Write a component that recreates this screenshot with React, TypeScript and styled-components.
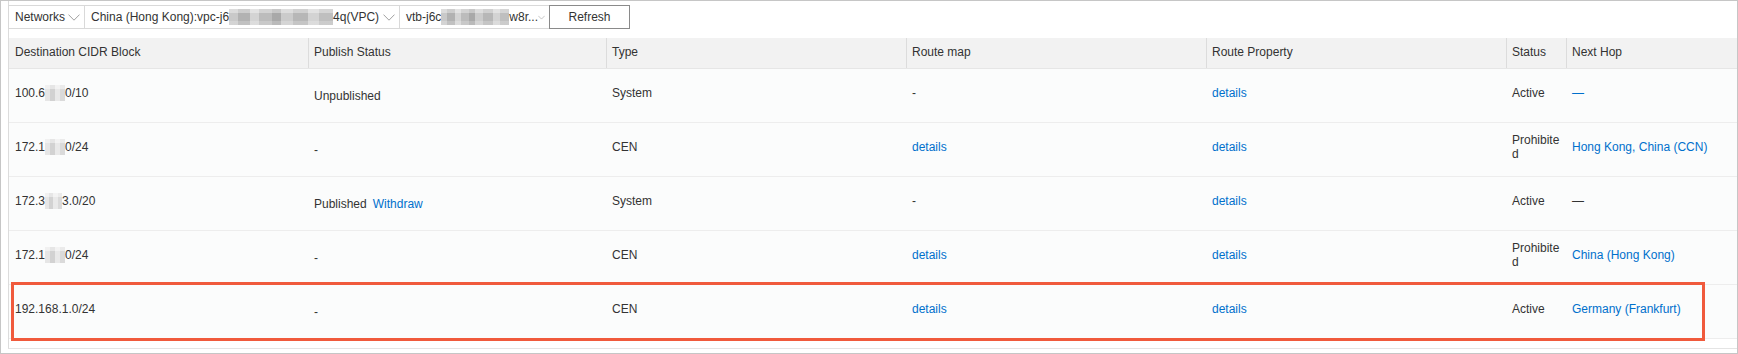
import React from 'react';
import styled, { createGlobalStyle } from 'styled-components';

const GlobalStyle = createGlobalStyle`
  html, body {
    margin: 0;
    padding: 0;
    background: #fff;
  }
  body {
    font-family: "Liberation Sans", Arial, sans-serif;
    font-size: 12px;
    color: #333;
  }
  * {
    box-sizing: border-box;
  }
`;

const Frame = styled.div`
  width: 1738px;
  height: 354px;
  border: 1px solid #c6c6c6;
  padding: 0 0 4px 7px;
  background: #fff;
`;

const Panel = styled.div`
  border-left: 1px solid #dcdcdc;
  border-bottom: 1px solid #e4e4e4;
  padding: 4px 0 9px;
`;

const Toolbar = styled.div`
  display: flex;
  height: 24px;
  margin: 0 0 9px -1px;
`;

const Select = styled.div<{ $w: number }>`
  display: flex;
  align-items: center;
  justify-content: space-between;
  width: ${p => p.$w}px;
  height: 24px;
  border: 1px solid #d9d9d9;
  padding: 0 4px 0 6px;
  white-space: nowrap;
  overflow: hidden;
  background: #fff;
  & + & {
    margin-left: -1px;
  }
`;

const SelectText = styled.span`
  display: flex;
  align-items: center;
  line-height: 14px;
`;

const Button = styled.button`
  width: 81px;
  height: 24px;
  margin-left: -1px;
  border: 1px solid #8a8a8a;
  background: #fff;
  color: #333;
  font: inherit;
  padding: 0;
  cursor: pointer;
`;

// mosaic used where the screenshot hides ids
const Blur = styled.span<{ $w: number; $light?: boolean }>`
  display: inline-block;
  width: ${p => p.$w}px;
  height: 16px;
  vertical-align: middle;
  background: ${p =>
    p.$light
      ? `linear-gradient(180deg, rgba(255,255,255,0.45) 0 25%, rgba(255,255,255,0) 25% 100%),
         linear-gradient(90deg, #e6e6e6 0 25%, #d2d2d2 25% 50%, #e9e9e9 50% 75%, #dadada 75% 100%)`
      : `linear-gradient(180deg, rgba(255,255,255,0.35) 0 25%, rgba(255,255,255,0) 25% 75%, rgba(255,255,255,0.2) 75% 100%),
         linear-gradient(90deg, #c9c9c9 0 9%, #b2b2b2 9% 20%, #d4d4d4 20% 29%, #bcbcbc 29% 41%, #a9a9a9 41% 50%, #cbcbcb 50% 62%, #b7b7b7 62% 76%, #d3d3d3 76% 87%, #bfbfbf 87% 100%)`};
`;

const Chevron = () => (
  <svg width="12" height="7" viewBox="0 0 12 7">
    <polyline points="0.5,0.6 6,6.2 11.5,0.6" fill="none" stroke="#a0a0a0" strokeWidth="1" />
  </svg>
);

const Table = styled.div``;

const Grid = styled.div`
  display: grid;
  grid-template-columns: 299px 298px 300px 300px 300px 60px 1fr;
`;

const HeadRow = styled(Grid)`
  height: 31px;
  background: #f2f2f2;
  border-bottom: 1px solid #e6e6e6;
`;

const HeadCell = styled.div`
  display: flex;
  align-items: center;
  padding: 0 6px 2px 5px;
  border-left: 1px solid #dcdcdc;
  color: #333;
  white-space: nowrap;
  overflow: hidden;
  &:first-child {
    border-left: none;
    padding-left: 6px;
  }
`;

const BodyRow = styled(Grid)`
  position: relative;
  height: 54px;
  background: #fbfcfc;
  border-bottom: 1px solid #ededed;
`;

const Cell = styled.div<{ $low?: boolean }>`
  display: flex;
  align-items: center;
  padding: 0 6px ${p => (p.$low ? 0 : 5)}px;
  line-height: 14px;
  word-break: break-all;
  color: #333;
`;

const Link = styled.a`
  color: #0070cc;
  text-decoration: none;
  cursor: pointer;
`;

const Withdraw = styled(Link)`
  margin-left: 6px;
`;

const Highlight = styled.div`
  position: absolute;
  top: -3px;
  bottom: -3px;
  left: 2px;
  right: 32px;
  border: 3px solid #f05a3c;
  pointer-events: none;
`;

type RowData = {
  cidr: React.ReactNode;
  publish: React.ReactNode;
  type: string;
  routeMap: boolean;
  status: string;
  hop: React.ReactNode;
};

const rows: RowData[] = [
  {
    cidr: <>100.6<Blur $w={20} $light />0/10</>,
    publish: 'Unpublished',
    type: 'System',
    routeMap: false,
    status: 'Active',
    hop: <Link>—</Link>,
  },
  {
    cidr: <>172.1<Blur $w={20} $light />0/24</>,
    publish: '-',
    type: 'CEN',
    routeMap: true,
    status: 'Prohibited',
    hop: <Link>Hong Kong, China (CCN)</Link>,
  },
  {
    cidr: <>172.3<Blur $w={17} $light />3.0/20</>,
    publish: <>Published<Withdraw>Withdraw</Withdraw></>,
    type: 'System',
    routeMap: false,
    status: 'Active',
    hop: '—',
  },
  {
    cidr: <>172.1<Blur $w={20} $light />0/24</>,
    publish: '-',
    type: 'CEN',
    routeMap: true,
    status: 'Prohibited',
    hop: <Link>China (Hong Kong)</Link>,
  },
  {
    cidr: '192.168.1.0/24',
    publish: '-',
    type: 'CEN',
    routeMap: true,
    status: 'Active',
    hop: <Link>Germany (Frankfurt)</Link>,
  },
];

const columns = ['Destination CIDR Block', 'Publish Status', 'Type', 'Route map', 'Route Property', 'Status', 'Next Hop'];

export default function App() {
  return (
    <>
      <GlobalStyle />
      <Frame>
        <Panel>
          <Toolbar>
            <Select $w={77}>
              <SelectText>Networks</SelectText>
              <Chevron />
            </Select>
            <Select $w={316}>
              <SelectText>
                China (Hong Kong):vpc-j6<Blur $w={104} />4q(VPC)
              </SelectText>
              <Chevron />
            </Select>
            <Select $w={151}>
              <SelectText>
                vtb-j6c<Blur $w={68} />w8r...
              </SelectText>
              <Chevron />
            </Select>
            <Button>Refresh</Button>
          </Toolbar>
          <Table>
            <HeadRow>
              {columns.map(c => (
                <HeadCell key={c}>{c}</HeadCell>
              ))}
            </HeadRow>
            {rows.map((r, i) => (
              <BodyRow key={i}>
                <Cell>{r.cidr}</Cell>
                <Cell $low>{r.publish}</Cell>
                <Cell>{r.type}</Cell>
                <Cell>{r.routeMap ? <Link>details</Link> : '-'}</Cell>
                <Cell>
                  <Link>details</Link>
                </Cell>
                <Cell>{r.status}</Cell>
                <Cell>{r.hop}</Cell>
                {i === rows.length - 1 && <Highlight />}
              </BodyRow>
            ))}
          </Table>
        </Panel>
      </Frame>
    </>
  );
}
